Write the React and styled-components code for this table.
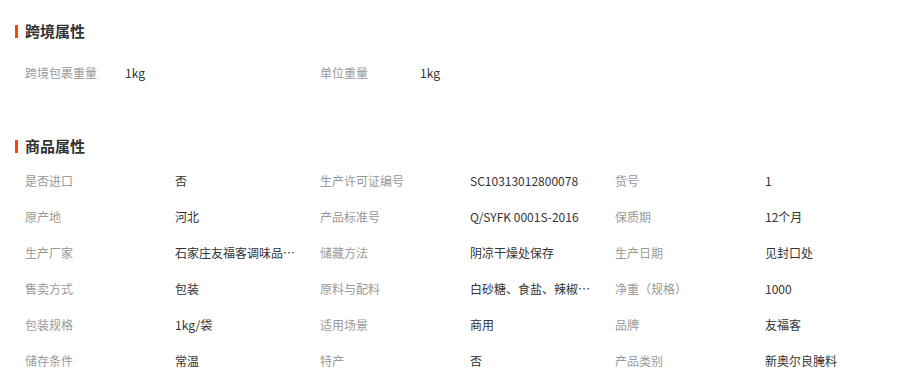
import React from 'react';
import styled, { createGlobalStyle } from 'styled-components';

const GlobalStyle = createGlobalStyle`
  body {
    margin: 0;
    background: #fff;
    font-family: "Noto Sans CJK SC", "Noto Sans", sans-serif;
    color: #333;
  }
`;

const Page = styled.div`
  padding: 21px 0 0 15px;
`;

const Section = styled.section`
  margin-bottom: ${(props) => props.gap || 0}px;
`;

const Title = styled.h3`
  margin: 0;
  height: 20px;
  line-height: 20px;
  font-size: 15px;
  font-weight: bold;
  color: #333;
  display: flex;
  align-items: center;
  gap: 7px;
  &::before {
    content: '';
    display: block;
    width: 3px;
    height: 13px;
    background-color: #ff4400;
  }
`;

const Grid = styled.div`
  display: grid;
  grid-auto-rows: 36px;
  grid-template-columns: ${(props) =>
    `${props.labelWidth}px ${295 - props.labelWidth}px `.repeat(3)};
  padding-left: 10px;
  margin-top: ${(props) => props.top}px;
`;

const Label = styled.div`
  font-size: 12px;
  line-height: 36px;
  color: #999;
  white-space: nowrap;
`;

const Value = styled.div`
  font-size: 12px;
  line-height: 36px;
  color: #333;
  max-width: 128px;
  white-space: nowrap;
  overflow: hidden;
  text-overflow: ellipsis;
`;

const crossBorder = [
  ['跨境包裹重量', '1kg'],
  ['单位重量', '1kg'],
];

const goods = [
  ['是否进口', '否'],
  ['生产许可证编号', 'SC10313012800078'],
  ['货号', '1'],
  ['原产地', '河北'],
  ['产品标准号', 'Q/SYFK 0001S-2016'],
  ['保质期', '12个月'],
  ['生产厂家', '石家庄友福客调味品有限公司'],
  ['储藏方法', '阴凉干燥处保存'],
  ['生产日期', '见封口处'],
  ['售卖方式', '包装'],
  ['原料与配料', '白砂糖、食盐、辣椒、花椒'],
  ['净重（规格）', '1000'],
  ['包装规格', '1kg/袋'],
  ['适用场景', '商用'],
  ['品牌', '友福客'],
  ['储存条件', '常温'],
  ['特产', '否'],
  ['产品类别', '新奥尔良腌料'],
];

const Attrs = ({ items, labelWidth, top }) => (
  <Grid labelWidth={labelWidth} top={top}>
    {items.map(([label, value]) => (
      <React.Fragment key={label}>
        <Label>{label}</Label>
        <Value title={value}>{value}</Value>
      </React.Fragment>
    ))}
  </Grid>
);

const App = () => {
  return (
    <>
      <GlobalStyle />
      <Page>
        <Section gap={45}>
          <Title>跨境属性</Title>
          <Attrs items={crossBorder} labelWidth={100} top={14} />
        </Section>
        <Section>
          <Title>商品属性</Title>
          <Attrs items={goods} labelWidth={150} top={7} />
        </Section>
      </Page>
    </>
  );
};

export default App;
